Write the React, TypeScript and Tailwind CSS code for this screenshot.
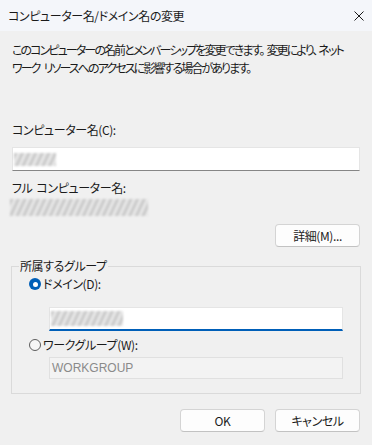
import React from 'react';

const Smudge = ({ className }: { className: string }) => (
  <div
    className={`bg-[repeating-linear-gradient(115deg,#d9d9d9_0px,#c2c2c2_2px,#ececec_4px,#e0e0e0_6px)] blur-[0.8px] ${className}`}
  />
);

const Button = ({ label }: { label: string }) => (
  <button className="w-[85px] h-[23px] rounded-[4px] bg-[#fdfdfd] border border-[#d4d4d4] border-b-[#c2c2c2] flex items-center justify-center text-[12px] text-[#1b1b1b]">
    {label}
  </button>
);

export default function App() {
  return (
    <div className="w-[372px] h-[445px] bg-[#f0f0f0] flex flex-col text-[12px] leading-[18px] text-[#1a1a1a] font-['Noto_Sans_CJK_JP',sans-serif] [font-feature-settings:'palt'] tracking-[-0.4px] overflow-hidden">
      {/* title bar */}
      <div className="h-[31px] shrink-0 bg-[#f4f6fa] flex items-center justify-between pl-[8px] pr-[8px]">
        <span>コンピューター名/ドメイン名の変更</span>
        <svg width="10" height="10" viewBox="0 0 10 10">
          <path d="M0.5 0.5L9.5 9.5M9.5 0.5L0.5 9.5" stroke="#1a1a1a" strokeWidth="1" />
        </svg>
      </div>

      <div className="flex flex-col px-[12px] pt-[10px]">
        <p className="whitespace-nowrap tracking-[-1.9px]">
          <span className="block">このコンピューターの名前とメンバーシップを変更できます。<span className="inline-block w-[3px]" />変更により、<span className="inline-block w-[2px]" />ネット</span>
          <span className="block">
            ワーク<span className="inline-block w-[4px]" />リソースへのアクセスに影響する場合があります。
          </span>
        </p>

        <label className="mt-[44px]">コンピューター名(C):</label>
        <div className="mt-[8px] h-[24px] bg-white border border-[#e5e5e5] border-b-[#868686] flex items-center pl-[1px]">
          <Smudge className="w-[42px] h-[13px]" />
        </div>

        <label className="mt-[8px]">
          フル<span className="inline-block w-[4px]" />コンピューター名:
        </label>
        <Smudge className="mt-[2px] ml-[-2px] w-[138px] h-[17px]" />

        <div className="mt-[8px] flex justify-end">
          <Button label="詳細(M)..." />
        </div>

        <fieldset className="mt-[10px] mx-[-1px] border border-[#dadada] pl-[17px] pb-[14px]">
          <legend className="ml-[-10px] px-[1px]">所属するグループ</legend>
          <div className="flex items-center h-[18px]">
            <span className="w-[12px] h-[12px] rounded-full bg-[#005fb8] flex items-center justify-center">
              <span className="w-[5px] h-[5px] rounded-full bg-white" />
            </span>
            <span className="ml-[2px]">ドメイン(D):</span>
          </div>
          <div className="mt-[14px] ml-[20px] w-[294px] h-[24px] bg-white border border-[#e5e5e5] border-b-2 border-b-[#005fb8] flex items-center pl-[1px]">
            <Smudge className="w-[72px] h-[15px]" />
          </div>
          <div className="mt-[5px] flex items-center h-[18px]">
            <span className="w-[12px] h-[12px] rounded-full border border-[#5e5e5e] bg-[#f7f7f7]" />
            <span className="ml-[2px]">ワークグループ(W):</span>
          </div>
          <div className="mt-[3px] ml-[20px] w-[294px] h-[22px] bg-[#f3f3f3] border border-[#e0e0e0] flex items-center pl-[2px] font-['Liberation_Sans',sans-serif] tracking-normal text-[#8a8a8a]">
            WORKGROUP
          </div>
        </fieldset>

        <div className="mt-[15px] flex justify-end gap-[10px]">
          <Button label="OK" />
          <Button label="キャンセル" />
        </div>
      </div>
    </div>
  );
}
